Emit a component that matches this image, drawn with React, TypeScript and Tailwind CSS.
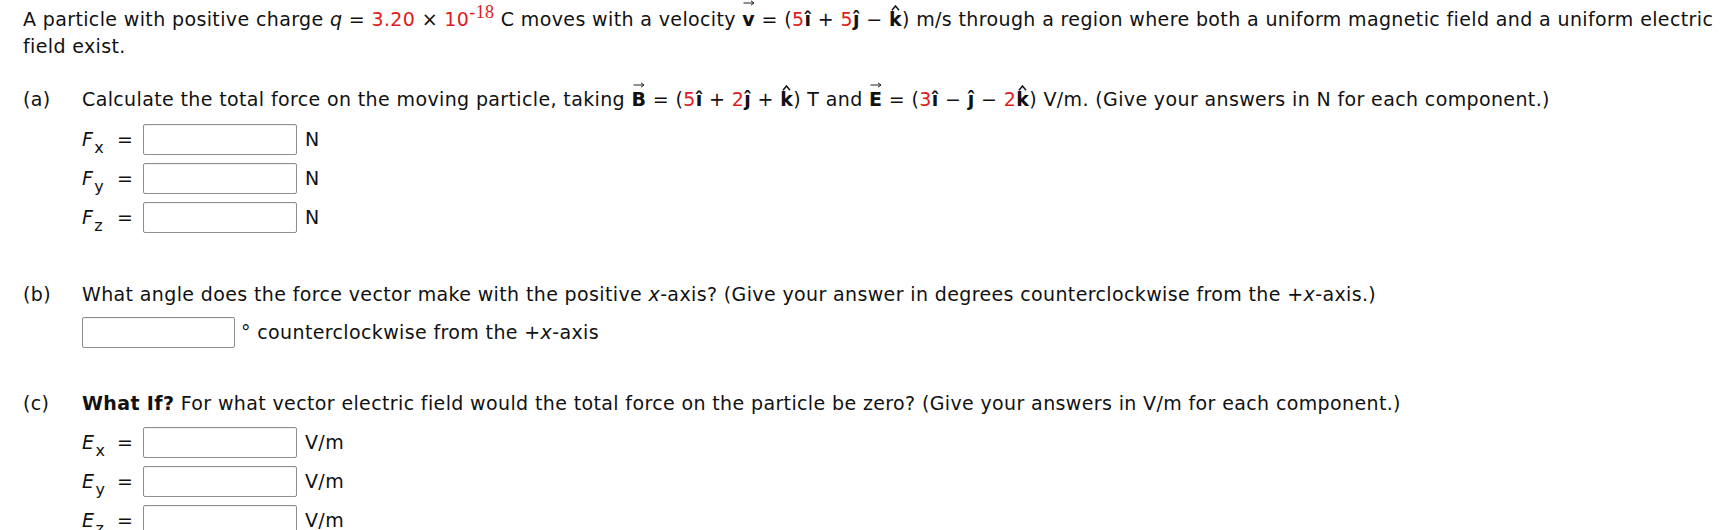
import React from "react";

const Red = ({ children }: { children: React.ReactNode }) => (
  <span className="text-[#e01b1b]">{children}</span>
);

const Arrow = () => (
  <svg width="12" height="6" viewBox="0 0 12 6" className="block">
    <path d="M0.5 3 H11 M8 0.8 L11 3 L8 5.2" stroke="#222" strokeWidth="1" fill="none" />
  </svg>
);

const VecSmall = ({ ch }: { ch: string }) => (
  <span className="relative inline-block leading-none font-bold">
    {ch}
    <span className="absolute left-1/2 -translate-x-1/2 top-[-10px]">
      <Arrow />
    </span>
  </span>
);

const VecCap = ({ ch }: { ch: string }) => (
  <span className="relative inline-block leading-none font-bold">
    {ch}
    <span className="absolute left-1/2 -translate-x-1/2 top-[-8px]">
      <Arrow />
    </span>
  </span>
);

const HatK = () => (
  <span className="relative inline-block leading-none font-bold">
    k
    <svg
      width="9"
      height="6"
      viewBox="0 0 9 6"
      className="absolute left-[2px] top-[-5px]"
    >
      <path d="M1 5.2 L4.5 1 L8 5.2" stroke="#111" strokeWidth="1.5" fill="none" />
    </svg>
  </span>
);

const B = ({ children }: { children: React.ReactNode }) => (
  <span className="font-bold">{children}</span>
);

const Box = ({ w = "w-[154px]" }: { w?: string }) => (
  <span
    className={`inline-block h-[31px] ${w} border border-[#8e8e8e] rounded-[2px] bg-white shadow-[inset_0_1px_1px_rgba(0,0,0,0.06)]`}
  />
);

const Row = ({ sym, sub, unit }: { sym: string; sub: string; unit: string }) => (
  <div className="flex items-center h-[31px]">
    <span className="w-[35px] whitespace-nowrap">
      <span className="italic">{sym}</span>
      <span className="text-[16px] relative top-[7px] ml-[1px]">{sub}</span>
    </span>
    <span className="w-[26px]">=</span>
    <Box />
    <span className="ml-[8px]">{unit}</span>
  </div>
);

export default function App() {
  return (
    <div className="min-h-[530px] bg-white text-[#111] font-['DejaVu_Sans',sans-serif] text-[19px] tracking-[0.37px] leading-[27px] pt-[6px] pl-[23px] overflow-hidden">
      <div className="whitespace-nowrap">
        A particle with positive charge <span className="italic">q</span> ={" "}
        <Red>3.20</Red> × <Red>10</Red>
        <Red>
          <span className="font-['Liberation_Serif',serif] text-[18px] align-[8px] leading-[0px]">
            -18
          </span>
        </Red>{" "}
        C moves with a velocity <VecSmall ch="v" /> = (<Red>5</Red>
        <B>î</B> + <Red>5</Red>
        <B>ĵ</B> − <HatK />) m/s through a region where both a uniform magnetic
        field and a uniform electric
        <br />
        field exist.
      </div>

      {/* (a) */}
      <div className="mt-[26px] flex">
        <span className="w-[59px] shrink-0">(a)</span>
        <div className="flex flex-col">
          <div className="whitespace-nowrap">
            Calculate the total force on the moving particle, taking{" "}
            <VecCap ch="B" /> = (<Red>5</Red>
            <B>î</B> + <Red>2</Red>
            <B>ĵ</B> + <HatK />) T and <VecCap ch="E" /> = (<Red>3</Red>
            <B>î</B> − <B>ĵ</B> − <Red>2</Red>
            <HatK />) V/m. (Give your answers in N for each component.)
          </div>
          <div className="mt-[11px] flex flex-col gap-[8px]">
            <Row sym="F" sub="x" unit="N" />
            <Row sym="F" sub="y" unit="N" />
            <Row sym="F" sub="z" unit="N" />
          </div>
        </div>
      </div>

      {/* (b) */}
      <div className="mt-[48px] flex">
        <span className="w-[59px] shrink-0">(b)</span>
        <div className="flex flex-col">
          <div className="whitespace-nowrap">
            What angle does the force vector make with the positive{" "}
            <span className="italic">x</span>-axis? (Give your answer in degrees
            counterclockwise from the +<span className="italic">x</span>-axis.)
          </div>
          <div className="mt-[9px] flex items-center h-[31px]">
            <Box w="w-[153px]" />
            <span className="ml-[6px] whitespace-nowrap">
              ° counterclockwise from the +<span className="italic">x</span>-axis
            </span>
          </div>
        </div>
      </div>

      {/* (c) */}
      <div className="mt-[42px] flex">
        <span className="w-[59px] shrink-0">(c)</span>
        <div className="flex flex-col">
          <div className="whitespace-nowrap">
            <span className="font-bold">What If?</span> For what vector electric
            field would the total force on the particle be zero? (Give your
            answers in V/m for each component.)
          </div>
          <div className="mt-[10px] flex flex-col gap-[8px]">
            <Row sym="E" sub="x" unit="V/m" />
            <Row sym="E" sub="y" unit="V/m" />
            <Row sym="E" sub="z" unit="V/m" />
          </div>
        </div>
      </div>
    </div>
  );
}
